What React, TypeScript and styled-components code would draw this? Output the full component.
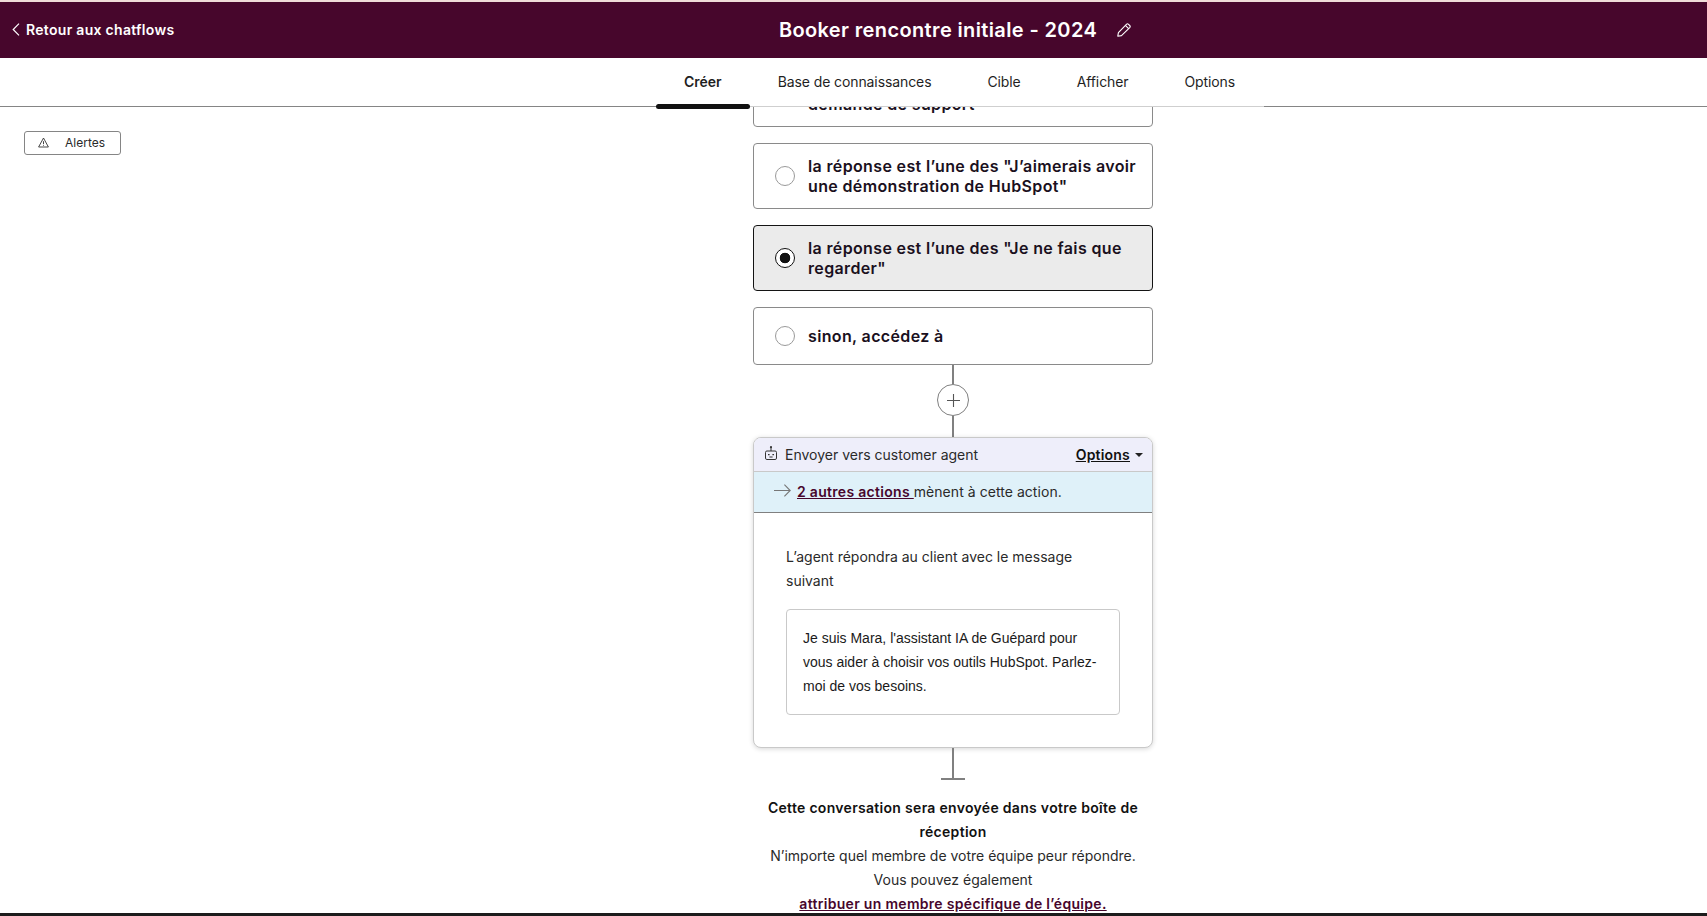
import React from "react";
import styled, { createGlobalStyle } from "styled-components";

const GlobalStyle = createGlobalStyle`
  html, body {
    margin: 0;
    padding: 0;
    height: 100%;
    background: #fff;
  }
  #root {
    height: 100%;
  }
  * {
    box-sizing: border-box;
  }
`;

const Page = styled.div`
  height: 916px;
  display: flex;
  flex-direction: column;
  overflow: hidden;
  border-top: 2px solid #f0dcd9;
  border-bottom: 3px solid #1c1c1c;
  font-family: Inter, "Liberation Sans", sans-serif;
  color: #1a1a1a;
`;

const Header = styled.header`
  flex: 0 0 56px;
  display: grid;
  grid-template-columns: 753px 400px 1fr;
  align-items: center;
  background: #47062c;
  color: #fff;
`;

const BackLink = styled.a`
  display: flex;
  align-items: center;
  gap: 6px;
  padding: 0 0 2px 12px;
  font-size: 14px;
  font-weight: 600;
  letter-spacing: 0.3px;
  color: #fff;
`;

const TitleRow = styled.div`
  display: flex;
  align-items: center;
  justify-content: center;
  gap: 20px;
  padding-left: 4px;
  white-space: nowrap;
`;

const Title = styled.h1`
  margin: 0;
  font-size: 20px;
  font-weight: 600;
  letter-spacing: 0.37px;
`;

const TabBar = styled.nav`
  flex: 0 0 49px;
  display: flex;
  padding-left: 656px;
  border-bottom: 1px solid #858585;
  background: #fff;
  position: relative;
  z-index: 1;
`;

const TabStrip = styled.div`
  display: flex;
  width: 608px;
  margin-bottom: -1px;
  border-bottom: 1px solid #cfcfcf;
`;

const Tab = styled.a<{ $active?: boolean }>`
  position: relative;
  display: flex;
  align-items: center;
  padding: 0 28px 2px;
  font-size: 14px;
  font-weight: ${p => (p.$active ? 600 : 400)};
  letter-spacing: ${p => (p.$active ? 0 : -0.1)}px;
  white-space: nowrap;
  color: #1f1f1f;

  ${p =>
    p.$active &&
    `
    &::after {
      content: "";
      position: absolute;
      left: 0;
      right: 0;
      bottom: -3px;
      height: 5px;
      border-radius: 3px;
      background: #111;
    }
  `}
`;

const Main = styled.main`
  flex: 1;
  min-height: 0;
  display: flex;
  align-items: flex-start;
  overflow: hidden;
`;

const SidePanel = styled.aside`
  flex: 0 0 753px;
  padding: 24px 0 0 24px;
`;

const AlertButton = styled.button`
  display: flex;
  align-items: center;
  width: 97px;
  height: 24px;
  padding: 0 0 2px 13px;
  gap: 16px;
  border: 1px solid #858585;
  border-radius: 3px;
  background: #fff;
  font-family: inherit;
  font-size: 12px;
  color: #2a2a2a;
`;

const Flow = styled.div`
  flex: 0 0 400px;
  margin-top: -46px;
  display: flex;
  flex-direction: column;
`;

const Branch = styled.div<{ $selected?: boolean; $short?: boolean }>`
  display: flex;
  align-items: center;
  gap: 13px;
  height: ${p => (p.$short ? 58 : 66)}px;
  margin-bottom: ${p => (p.$short ? 0 : 16)}px;
  padding: 0 10px 0 21px;
  border: 1px solid ${p => (p.$selected ? "#141414" : "#8a8a8a")};
  border-radius: 4px;
  background: ${p => (p.$selected ? "#ebebeb" : "#fff")};
  font-size: 16px;
  font-weight: 600;
  letter-spacing: 0.36px;
  line-height: 20px;
  color: #1a1020;
`;

/* the first branch is scrolled under the tab bar: only its last line shows */
const ClippedLabel = styled.span`
  align-self: flex-end;
  margin-bottom: 12px;
`;

const Radio = styled.span<{ $checked?: boolean }>`
  flex: 0 0 20px;
  height: 20px;
  border-radius: 50%;
  border: 1px solid ${p => (p.$checked ? "#111" : "#9a9a9a")};
  background: ${p =>
    p.$checked ? "radial-gradient(circle, #111 0 5px, #fff 5.6px)" : "#fff"};
`;

const Connector = styled.div<{ $height: number }>`
  align-self: center;
  width: 2px;
  height: ${p => p.$height}px;
  background: #808080;
`;

const AddButton = styled.button`
  align-self: center;
  width: 32px;
  height: 32px;
  padding: 0;
  display: flex;
  align-items: center;
  justify-content: center;
  border: 1px solid #808080;
  border-radius: 50%;
  background: #fff;
  color: #555;
`;

const ActionCard = styled.section`
  border: 1px solid #c9c9c9;
  border-radius: 8px;
  box-shadow: 0 1px 5px rgba(0, 0, 0, 0.16);
  background: #fff;
  overflow: hidden;
`;

const ActionHeader = styled.div`
  display: flex;
  align-items: center;
  height: 34px;
  padding: 0 9px 0 11px;
  background: #eeeefa;
  border-bottom: 1px solid #c9c9c9;
  font-size: 14px;

  svg {
    margin-bottom: 4px;
  }
`;

const ActionName = styled.span`
  flex: 1;
  margin-left: 8px;
  color: #2a2a2a;
`;

const OptionsLink = styled.a`
  display: flex;
  align-items: center;
  gap: 5px;
  font-weight: 600;
  letter-spacing: 0.2px;
  text-decoration: underline;
  color: #111;
`;

const Caret = styled.i`
  width: 0;
  height: 0;
  border-left: 4px solid transparent;
  border-right: 4px solid transparent;
  border-top: 4px solid #222;
`;

const Banner = styled.div`
  display: flex;
  align-items: center;
  gap: 6px;
  height: 41px;
  padding: 0 0 1px 20px;
  background: #dff1f9;
  border-bottom: 1px solid #808080;
  font-size: 14px;
  letter-spacing: 0.05px;
  color: #2a2a2a;

  svg {
    margin-bottom: 3px;
  }
`;

const BannerLink = styled.a`
  font-weight: 600;
  letter-spacing: 0.3px;
  color: #47062c;
  text-decoration: underline;
`;

const ActionBody = styled.div`
  padding: 32px;
  font-size: 14px;
  line-height: 24px;
  color: #2a2a2a;
`;

const MessageBox = styled.div`
  margin-top: 16px;
  padding: 16px;
  border: 1px solid #c9c9c9;
  border-radius: 4px;
  font-family: "Liberation Sans", Arial, sans-serif;
  color: #1a1a1a;
`;

const FlowEnd = styled.div`
  align-self: center;
  width: 24px;
  height: 32px;
  display: flex;
  flex-direction: column;
  align-items: center;
`;

const FlowEndStem = styled.span`
  flex: 1;
  width: 2px;
  background: #808080;
`;

const FlowEndFoot = styled.span`
  width: 100%;
  height: 2px;
  background: #808080;
`;

const EndNote = styled.div`
  margin-top: 16px;
  padding: 0 6px;
  text-align: center;
  font-size: 14px;
  line-height: 24px;
  color: #2a2a2a;
`;

const EndNoteTitle = styled.strong`
  display: block;
  font-weight: 600;
  letter-spacing: 0.3px;
  color: #111;
`;

const EndNoteLink = styled.a`
  display: block;
  font-weight: 600;
  letter-spacing: 0.3px;
  color: #47062c;
  text-decoration: underline;
`;

const Chevron = () => (
  <svg width="8" height="13" viewBox="0 0 8 13" fill="none" stroke="#fff" strokeWidth="1.2">
    <path d="M7 .6 1.2 6.5 7 12.4" />
  </svg>
);

const PencilIcon = () => (
  <svg width="14" height="14" viewBox="0 0 14 14" fill="none" stroke="#fff" strokeWidth="1.1" strokeLinejoin="round">
    <path d="M.8 13.2 1.4 9.6 9.4 1.3a1.5 1.5 0 0 1 2.1 0l1.2 1.2a1.5 1.5 0 0 1 0 2.1L4.5 12.6l-3.7.6Z" />
    <path d="M8.4 2.4 11.6 5.6" />
  </svg>
);

const WarningIcon = () => (
  <svg width="11" height="11" viewBox="0 0 11 11" fill="none" stroke="#333" strokeWidth="0.9" strokeLinejoin="round">
    <path d="M5.5 1 10.4 10H.6L5.5 1Z" />
    <path d="M5.5 4.2v3M5.5 8.1v.7" />
  </svg>
);

const PlusIcon = () => (
  <svg width="13" height="13" viewBox="0 0 13 13" stroke="currentColor" strokeWidth="1.1">
    <path d="M6.5 0v13M0 6.5h13" />
  </svg>
);

const BotIcon = () => (
  <svg width="12" height="14" viewBox="0 0 12 14" fill="none" stroke="#333" strokeWidth="1">
    <circle cx="6" cy="1.2" r="1.1" fill="#333" stroke="none" />
    <path d="M6 2v3" />
    <rect x=".5" y="5" width="11" height="8.5" rx="1.4" />
    <path d="M3 8.6h1.6M7.4 8.6H9" strokeWidth="1.4" />
    <path d="M4.4 11h3.2" />
  </svg>
);

const ArrowIcon = () => (
  <svg width="17" height="13" viewBox="0 0 17 13" fill="none" stroke="#777" strokeWidth="1.1">
    <path d="M0 6.5h16M10.4 .7 16.2 6.5l-5.8 5.8" />
  </svg>
);

const tabs = ["Créer", "Base de connaissances", "Cible", "Afficher", "Options"];

const branches = [
  { label: <>la réponse est l’une des "J’aimerais avoir une démonstration de HubSpot"</> },
  { label: <>la réponse est l’une des "Je ne fais que regarder"</>, selected: true },
];

export default function App() {
  return (
    <Page>
      <GlobalStyle />
      <Header>
        <BackLink>
          <Chevron />
          Retour aux chatflows
        </BackLink>
        <TitleRow>
          <Title>Booker rencontre initiale - 2024</Title>
          <PencilIcon />
        </TitleRow>
      </Header>
      <TabBar>
        <TabStrip>
          {tabs.map((t, i) => (
            <Tab key={t} $active={i === 0}>
              {t}
            </Tab>
          ))}
        </TabStrip>
      </TabBar>
      <Main>
        <SidePanel>
          <AlertButton>
            <WarningIcon />
            Alertes
          </AlertButton>
        </SidePanel>
        <Flow>
          <Branch>
            <Radio />
            <ClippedLabel>demande de support"</ClippedLabel>
          </Branch>
          {branches.map((b, i) => (
            <Branch key={i} $selected={b.selected}>
              <Radio $checked={b.selected} />
              <span>{b.label}</span>
            </Branch>
          ))}
          <Branch $short>
            <Radio />
            <span>sinon, accédez à</span>
          </Branch>
          <Connector $height={19} />
          <AddButton>
            <PlusIcon />
          </AddButton>
          <Connector $height={21} />
          <ActionCard>
            <ActionHeader>
              <BotIcon />
              <ActionName>Envoyer vers customer agent</ActionName>
              <OptionsLink>
                Options
                <Caret />
              </OptionsLink>
            </ActionHeader>
            <Banner>
              <ArrowIcon />
              <span>
                <BannerLink>2 autres actions </BannerLink>mènent à cette action.
              </span>
            </Banner>
            <ActionBody>
              L’agent répondra au client avec le message suivant
              <MessageBox>
                Je suis Mara, l'assistant IA de Guépard pour vous aider à choisir vos outils HubSpot. Parlez-moi de vos besoins.
              </MessageBox>
            </ActionBody>
          </ActionCard>
          <FlowEnd>
            <FlowEndStem />
            <FlowEndFoot />
          </FlowEnd>
          <EndNote>
            <EndNoteTitle>Cette conversation sera envoyée dans votre boîte de réception</EndNoteTitle>
            N’importe quel membre de votre équipe peur répondre.
            <br />
            Vous pouvez également
            <EndNoteLink>attribuer un membre spécifique de l’équipe.</EndNoteLink>
          </EndNote>
        </Flow>
      </Main>
    </Page>
  );
}
